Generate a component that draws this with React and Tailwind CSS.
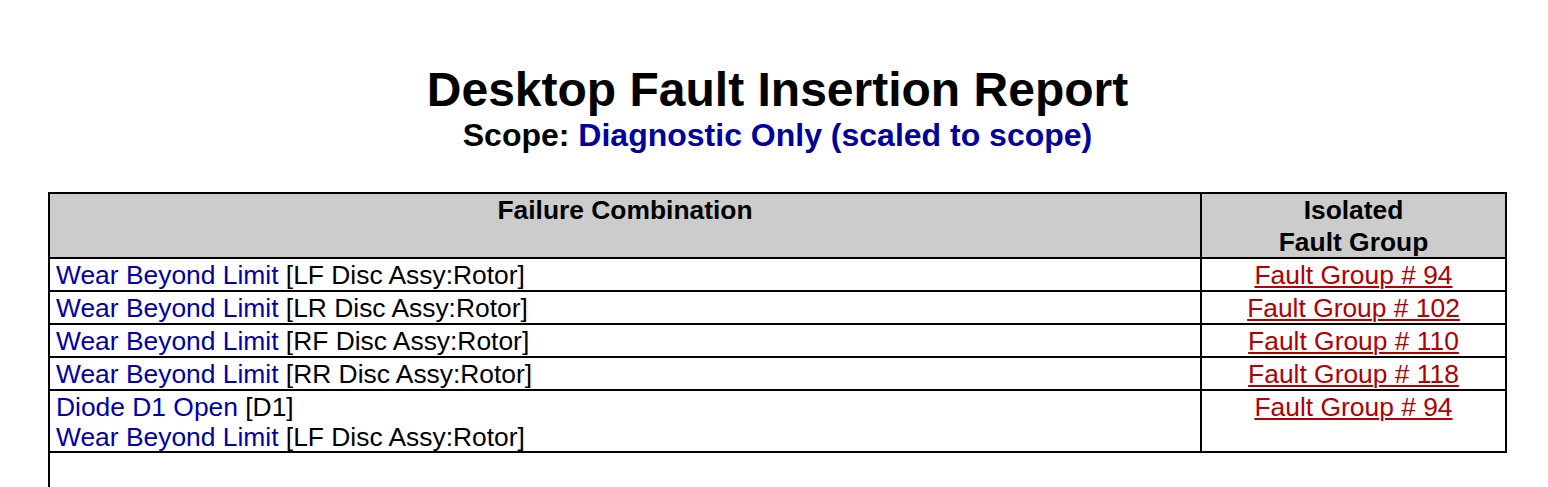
import React from "react";

const rows = [
  { items: [["Wear Beyond Limit", "[LF Disc Assy:Rotor]"]], fg: "Fault Group # 94" },
  { items: [["Wear Beyond Limit", "[LR Disc Assy:Rotor]"]], fg: "Fault Group # 102" },
  { items: [["Wear Beyond Limit", "[RF Disc Assy:Rotor]"]], fg: "Fault Group # 110" },
  { items: [["Wear Beyond Limit", "[RR Disc Assy:Rotor]"]], fg: "Fault Group # 118" },
];

function Item({ a, b }) {
  return (
    <div className="leading-[30px] whitespace-nowrap">
      <span className="text-[#0000a8]">{a}</span>{" "}
      <span className="text-black">{b}</span>
    </div>
  );
}

function FG({ t }) {
  return (
    <div className="leading-[30px] text-center">
      <span className="text-[#b00000] underline decoration-[2px] underline-offset-[2px]">{t}</span>
    </div>
  );
}

export default function App() {
  return (
    <div className="w-[1548px] h-[487px] overflow-hidden bg-white font-['Liberation_Sans',Arial,sans-serif]">
      <div className="ml-[48px] w-[1459px] pt-[66px]">
        <div className="text-center text-[48px] leading-[48px] font-bold text-black">
          Desktop Fault Insertion Report
        </div>
        <div className="mt-[5px] text-center text-[32px] leading-[32px] font-bold text-black">
          Scope: <span className="text-[#00009c]">Diagnostic Only (scaled to scope)</span>
        </div>
      </div>
      <div className="ml-[48px] mt-[41px] w-[1459px] border-2 border-black text-[26.4px]">
        <div className="flex h-[65px] border-b-2 border-black bg-[#cccccc] font-bold leading-[32px] text-black">
          <div className="w-[1150px] text-center">Failure Combination</div>
          <div className="flex-1 border-l-2 border-black text-center">
            <div>Isolated</div>
            <div>Fault Group</div>
          </div>
        </div>
        {rows.map((r, i) => (
          <div key={i} className="flex h-[33px] border-b-2 border-black">
            <div className="w-[1150px] pl-[6px] pt-[1px]">
              {r.items.map(([a, b], j) => (
                <Item key={j} a={a} b={b} />
              ))}
            </div>
            <div className="flex-1 border-l-2 border-black pt-[1px]">
              <FG t={r.fg} />
            </div>
          </div>
        ))}
        <div className="flex h-[60px]">
          <div className="w-[1150px] pl-[6px] pt-[1px]">
            <Item a="Diode D1 Open" b="[D1]" />
            <Item a="Wear Beyond Limit" b="[LF Disc Assy:Rotor]" />
          </div>
          <div className="flex-1 border-l-2 border-black pt-[1px]">
            <FG t="Fault Group # 94" />
          </div>
        </div>
      </div>
      <div className="ml-[48px] h-[40px] border-l-2 border-black"></div>
    </div>
  );
}
